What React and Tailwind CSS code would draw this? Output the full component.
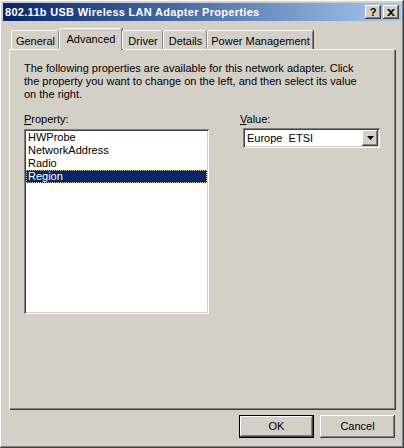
import React, { useState } from "react";

const raised =
  "shadow-[inset_-1px_-1px_#404040,inset_1px_1px_#ffffff,inset_-2px_-2px_#808080,inset_2px_2px_#d4d0c8]";
const sunken =
  "shadow-[inset_1px_1px_#808080,inset_-1px_-1px_#ffffff,inset_2px_2px_#404040,inset_-2px_-2px_#d4d0c8]";

const tabs = [
  { label: "General", w: "w-[48px]" },
  { label: "Advanced", w: "w-[63px]" },
  { label: "Driver", w: "w-[41px]" },
  { label: "Details", w: "w-[44px]" },
  { label: "Power Management", w: "w-[106px]" },
];

const properties = ["HWProbe", "NetworkAddress", "Radio", "Region"];

function App() {
  const [active, setActive] = useState("Advanced");
  const [selected, setSelected] = useState("Region");

  return (
    <div
      className={`w-[404px] h-[448px] bg-[#d4d0c8] p-[3px] flex flex-col text-[11px] text-black ${raised}`}
      style={{ fontFamily: '"Liberation Sans", Arial, sans-serif' }}
    >
      {/* Title bar */}
      <div className="h-[18px] flex items-center justify-between pl-[2px] pr-[2px] bg-gradient-to-r from-[#0a246a] to-[#a6caf0]">
        <span className="text-white font-bold text-[11px] tracking-[0.3px] leading-none">
          802.11b USB Wireless LAN Adapter Properties
        </span>
        <div className="flex gap-[2px]">
          <div
            className={`w-[16px] h-[14px] bg-[#d4d0c8] flex items-center justify-center font-bold text-[11px] leading-none ${raised}`}
          >
            ?
          </div>
          <div
            className={`w-[16px] h-[14px] bg-[#d4d0c8] flex items-center justify-center ${raised}`}
          >
            <svg width="8" height="7" viewBox="0 0 8 7">
              <path d="M0 0h2l2 2 2-2h2L5 3.5 8 7H6L4 5 2 7H0l3-3.5z" fill="#000" />
            </svg>
          </div>
        </div>
      </div>

      {/* Tabs */}
      <div className="flex items-end h-[21px] mt-[7px] pl-[8px] relative z-10">
        {tabs.map((t) => {
          const on = t.label === active;
          return (
            <button
              key={t.label}
              onClick={() => setActive(t.label)}
              className={`${t.w} flex items-start justify-center bg-[#d4d0c8] border-t border-l border-white rounded-t-[2px] shadow-[inset_-1px_0_#808080,1px_0_#404040] ${
                on ? "h-[22px] -mb-[1px] pt-[4px]" : "h-[19px] pt-[4px]"
              }`}
            >
              <span className="leading-[13px]">{t.label}</span>
            </button>
          );
        })}
      </div>

      {/* Panel */}
      <div className="mx-[6px] h-[360px] border-t border-l border-white shadow-[inset_-1px_-1px_#808080,1px_1px_#404040] pt-[12px] pl-[14px] pr-[8px]">
        <p className="leading-[13px]">
          The following properties are available for this network adapter. Click
          <br />
          the property you want to change on the left, and then select its value
          <br />
          on the right.
        </p>

        <div className="flex mt-[12px]">
          <div className="w-[185px]">
            <div className="leading-[13px] h-[16px]">
              <span className="underline">P</span>roperty:
            </div>
            <div className={`bg-white h-[185px] p-[2px] ${sunken}`}>
              {properties.map((p) => (
                <div
                  key={p}
                  onClick={() => setSelected(p)}
                  className={`h-[13px] leading-[13px] pl-[2px] ${
                    p === selected
                      ? "bg-[#0a246a] text-white outline-1 outline-dotted outline-[#c8c8a0] -outline-offset-1"
                      : ""
                  }`}
                >
                  {p}
                </div>
              ))}
            </div>
          </div>

          <div className="ml-[31px]">
            <div className="leading-[13px] h-[15px]">
              <span className="underline">V</span>alue:
            </div>
            <div
              className={`ml-[3px] w-[137px] h-[20px] bg-white flex items-center justify-between pl-[4px] pr-[2px] ${sunken}`}
            >
              <span className="leading-none">Europe&nbsp;&nbsp;ETSI</span>
              <div
                className={`w-[16px] h-[16px] bg-[#d4d0c8] flex items-center justify-center ${raised}`}
              >
                <svg width="7" height="4" viewBox="0 0 7 4">
                  <path d="M0 0h7L3.5 4z" fill="#000" />
                </svg>
              </div>
            </div>
          </div>
        </div>
      </div>

      {/* Buttons */}
      <div className="flex justify-end gap-[6px] mt-[6px] pr-[6px]">
        <button
          className={`w-[75px] h-[23px] bg-[#d4d0c8] border border-black shadow-[inset_-1px_-1px_#404040,inset_1px_1px_#ffffff,inset_-2px_-2px_#808080] leading-none`}
        >
          OK
        </button>
        <button className={`w-[75px] h-[23px] bg-[#d4d0c8] leading-none ${raised}`}>
          Cancel
        </button>
      </div>
    </div>
  );
}

export default App;
